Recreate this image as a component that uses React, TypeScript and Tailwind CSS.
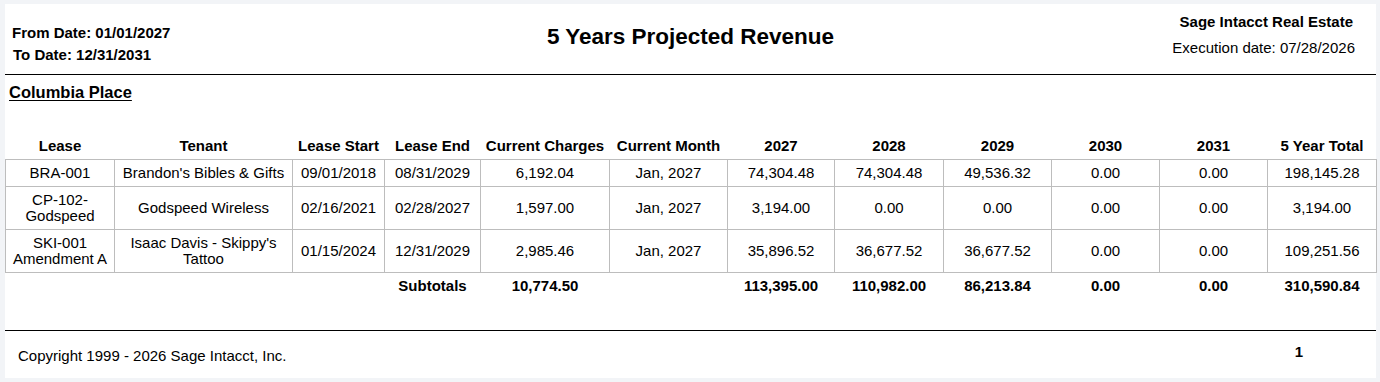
type Row = {
  lease: string
  tenant: string
  start: string
  end: string
  charges: string
  month: string
  years: string[]
  total: string
}

const rows: Row[] = [
  {
    lease: 'BRA-001',
    tenant: "Brandon's Bibles & Gifts",
    start: '09/01/2018',
    end: '08/31/2029',
    charges: '6,192.04',
    month: 'Jan, 2027',
    years: ['74,304.48', '74,304.48', '49,536.32', '0.00', '0.00'],
    total: '198,145.28',
  },
  {
    lease: 'CP-102-Godspeed',
    tenant: 'Godspeed Wireless',
    start: '02/16/2021',
    end: '02/28/2027',
    charges: '1,597.00',
    month: 'Jan, 2027',
    years: ['3,194.00', '0.00', '0.00', '0.00', '0.00'],
    total: '3,194.00',
  },
  {
    lease: 'SKI-001 Amendment A',
    tenant: "Isaac Davis - Skippy's Tattoo",
    start: '01/15/2024',
    end: '12/31/2029',
    charges: '2,985.46',
    month: 'Jan, 2027',
    years: ['35,896.52', '36,677.52', '36,677.52', '0.00', '0.00'],
    total: '109,251.56',
  },
]

const headers = ['Lease', 'Tenant', 'Lease Start', 'Lease End', 'Current Charges', 'Current Month', '2027', '2028', '2029', '2030', '2031', '5 Year Total']
const widths = [109, 178, 92, 96, 129, 118, 107, 109, 108, 108, 108, 109]

const subtotals = ['', '', '', 'Subtotals', '10,774.50', '', '113,395.00', '110,982.00', '86,213.84', '0.00', '0.00', '310,590.84']

const td = 'border border-[#bdbdbd] px-[4px] py-[5px] text-center align-middle leading-[16px]'

export default function App() {
  return (
    <div className="h-[382px] w-[1380px] overflow-hidden bg-[#f2f4f7] pt-[4px] pl-[5px] pr-[4px] font-['Liberation_Sans',Arial,sans-serif] text-[15px] text-black">
      <div className="flex h-[374px] flex-col bg-white">
        {/* report header */}
        <div className="grid h-[71px] grid-cols-[1fr_auto_1fr] border-b border-black">
          <div className="pt-[20px] pl-[7px] font-bold leading-[17px]">
            <div>From Date: 01/01/2027</div>
            <div className="mt-[5px] ml-px">To Date: 12/31/2031</div>
          </div>
          <div className="pt-[20px] text-[22.5px] leading-[26px] font-bold">5 Years Projected Revenue</div>
          <div className="pt-[9px] pr-[21px] text-right leading-[17px]">
            <div className="mr-[2px] font-bold">Sage Intacct Real Estate</div>
            <div className="mt-[9px]">Execution date: 07/28/2026</div>
          </div>
        </div>

        <div className="pt-[8px] pl-[4px] text-[16.5px] leading-[19px]">
          <span className="font-bold underline underline-offset-2">Columbia Place</span>
        </div>

        <table className="mt-[30px] w-full table-fixed border-collapse">
          <colgroup>
            {widths.map((w, i) => (
              <col key={i} style={{ width: w }} />
            ))}
          </colgroup>
          <thead>
            <tr>
              {headers.map(h => (
                <th key={h} className="h-[27px] px-[2px] pt-[2px] text-center align-middle font-bold leading-[16px] whitespace-nowrap">
                  {h}
                </th>
              ))}
            </tr>
          </thead>
          <tbody>
            {rows.map(r => (
              <tr key={r.lease}>
                <td className={td}>{r.lease}</td>
                <td className={td}>{r.tenant}</td>
                <td className={td}>{r.start}</td>
                <td className={td}>{r.end}</td>
                <td className={td}>{r.charges}</td>
                <td className={td}>{r.month}</td>
                {r.years.map((y, i) => (
                  <td key={i} className={td}>{y}</td>
                ))}
                <td className={td}>{r.total}</td>
              </tr>
            ))}
            <tr>
              {subtotals.map((s, i) => (
                <td key={i} className="px-[4px] pt-[5px] pb-[7px] text-center align-middle font-bold leading-[16px]">
                  {s}
                </td>
              ))}
            </tr>
          </tbody>
        </table>

        <div className="h-[29px]" />

        {/* footer */}
        <div className="flex flex-1 justify-between border-t border-black">
          <div className="pt-[16px] pl-[13px] leading-[17px]">Copyright 1999 - 2026 Sage Intacct, Inc.</div>
          <div className="pt-[12px] pr-[73px] font-bold leading-[17px]">1</div>
        </div>
      </div>
    </div>
  )
}
